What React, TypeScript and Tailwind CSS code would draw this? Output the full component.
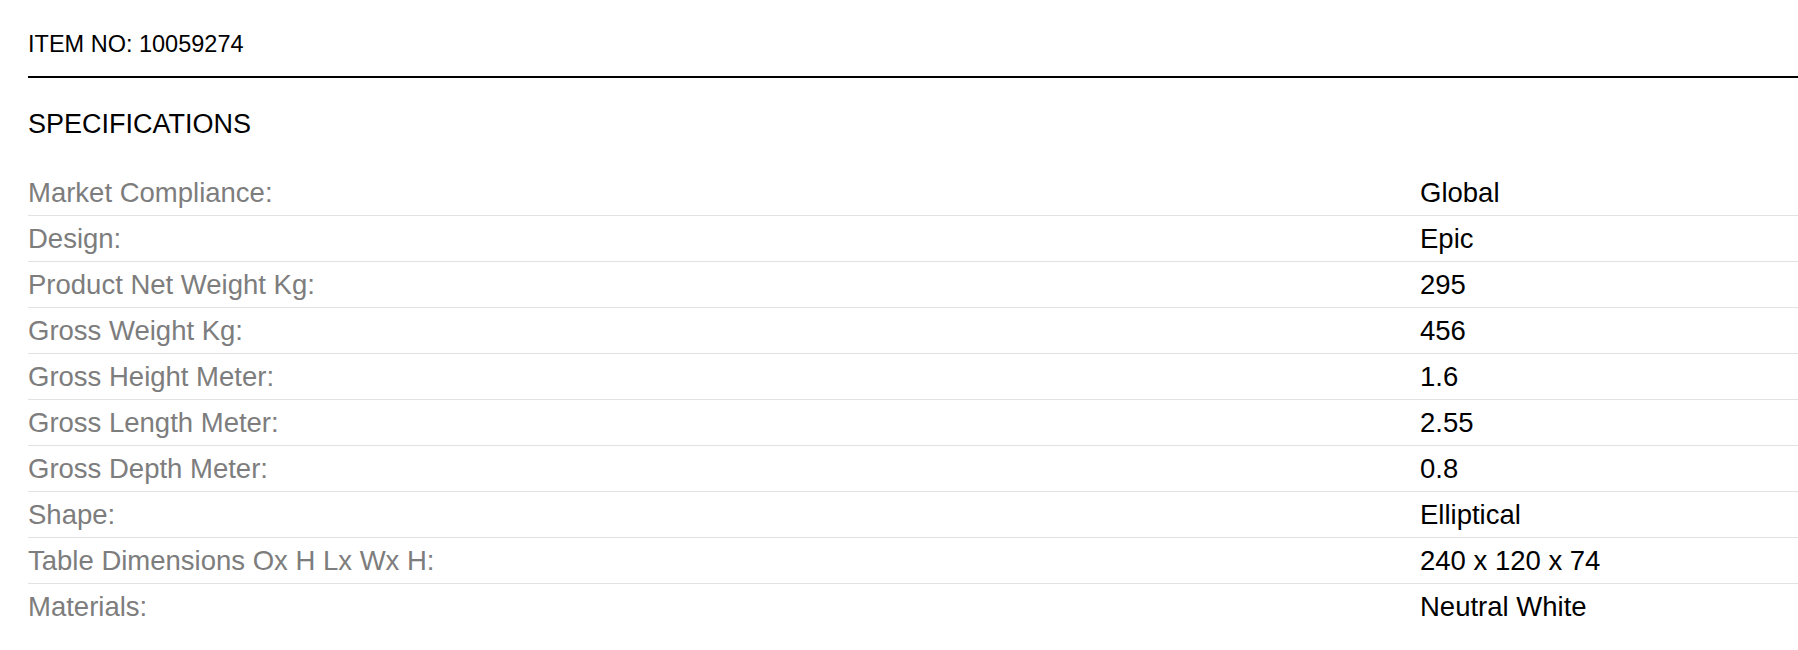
const specs: [string, string][] = [
  ['Market Compliance:', 'Global'],
  ['Design:', 'Epic'],
  ['Product Net Weight Kg:', '295'],
  ['Gross Weight Kg:', '456'],
  ['Gross Height Meter:', '1.6'],
  ['Gross Length Meter:', '2.55'],
  ['Gross Depth Meter:', '0.8'],
  ['Shape:', 'Elliptical'],
  ['Table Dimensions Ox H Lx Wx H:', '240 x 120 x 74'],
  ['Materials:', 'Neutral White'],
];

const App = () => {
  return (
    <div className="min-h-[650px] w-full bg-white pl-[28px] font-['Liberation_Sans',Arial,sans-serif]">
      <div className="pt-[30px] text-[23.5px] leading-[28px] text-black">ITEM NO: 10059274</div>
      <div className="mt-[18px] h-[2px] w-full bg-black" />
      <h2 className="mt-[30px] text-[27px] leading-[32px] text-black">SPECIFICATIONS</h2>
      <div className="mt-[30px]">
        {specs.map(([label, value], i) => (
          <div
            key={label}
            className={
              i < specs.length - 1
                ? 'flex border-b border-[#e2e2e2] text-[27.5px] leading-[45px]'
                : 'flex text-[27.5px] leading-[45px]'
            }
          >
            <div className="w-[1392px] shrink-0 text-[#7d7d7d]">{label}</div>
            <div className="text-black">{value}</div>
          </div>
        ))}
      </div>
    </div>
  );
};

export default App;
